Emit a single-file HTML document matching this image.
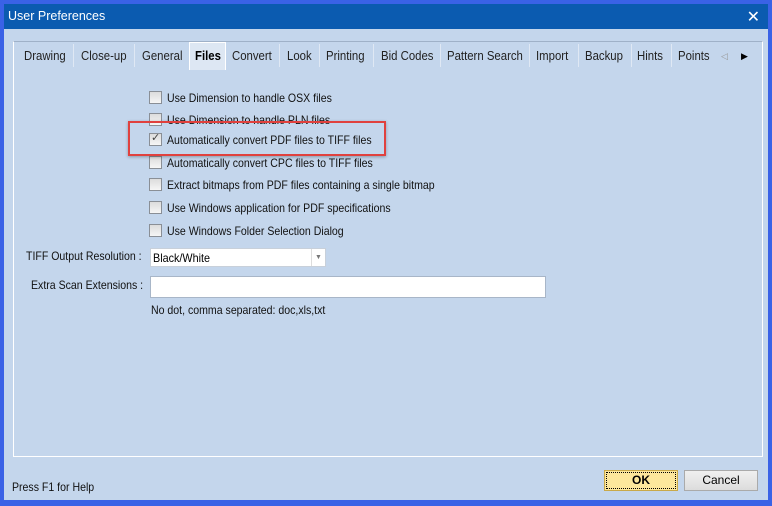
<!DOCTYPE html>
<html><head><style>
*{margin:0;padding:0;box-sizing:border-box}
body{width:772px;height:506px;overflow:hidden;background:#3a62e6;font-family:"Liberation Sans",sans-serif;font-size:12px;color:#000;position:relative}
.win{position:absolute;left:4px;top:4px;width:764px;height:496px;background:#c4d6ec}
.title{position:absolute;left:0;top:0;width:764px;height:25px;background:#0b5bb0;color:#fff;font-size:12.5px;padding:5px 4px}
.x{position:absolute;right:8px;top:3px;color:#fff;font-size:16px}
.panel{position:absolute;left:9px;top:37px;width:750px;height:416px;border:1px solid #fff;border-top:1px solid #9fb1c8}
.tab{position:absolute;top:49px;font-size:12.5px;color:#222;transform:scaleX(.91);transform-origin:left;white-space:nowrap}
.sep{position:absolute;top:44px;width:1px;height:23px;background:#dfe8f4}
.act{position:absolute;left:189px;top:42px;width:37px;height:28px;background:#dde7f3;border:1px solid #fff;border-bottom:none}
.cb{position:absolute;left:149px;width:13px;height:13px;border:1px solid #8a8f96;background:linear-gradient(#dcdcdc,#f6f6f6)}
.lb,.t{position:absolute;font-size:12px;color:#111;transform:scaleX(.88);transform-origin:left;white-space:nowrap}
.lb{left:167px}
.red{position:absolute;left:128px;top:121px;width:258px;height:35px;border:2px solid #e0413e;box-shadow:0 1px 3px rgba(0,0,0,.3)}
.btn{position:absolute;top:470px;height:21px;width:74px;text-align:center;line-height:19px;font-size:12px}
</style></head><body>
<div class="win">
<div class="title">User Preferences<span class="x">✕</span></div>
<div class="panel"></div>
</div>
<div class="act"></div>
<span class="tab" style="left:24px">Drawing</span><i class="sep" style="left:73px"></i>
<span class="tab" style="left:81px">Close-up</span><i class="sep" style="left:134px"></i>
<span class="tab" style="left:142px">General</span>
<span class="tab" style="left:195px;font-weight:bold;color:#000">Files</span>
<span class="tab" style="left:232px">Convert</span><i class="sep" style="left:279px"></i>
<span class="tab" style="left:287px">Look</span><i class="sep" style="left:319px"></i>
<span class="tab" style="left:326px">Printing</span><i class="sep" style="left:373px"></i>
<span class="tab" style="left:381px">Bid Codes</span><i class="sep" style="left:440px"></i>
<span class="tab" style="left:447px">Pattern Search</span><i class="sep" style="left:529px"></i>
<span class="tab" style="left:536px">Import</span><i class="sep" style="left:578px"></i>
<span class="tab" style="left:585px">Backup</span><i class="sep" style="left:631px"></i>
<span class="tab" style="left:637px">Hints</span><i class="sep" style="left:671px"></i>
<span class="tab" style="left:678px">Points</span>
<span style="position:absolute;left:721px;top:51px;font-size:9px;color:#999">◁</span>
<span style="position:absolute;left:741px;top:51px;font-size:9px;color:#000">▶</span>

<i class="cb" style="top:91px"></i><span class="lb" style="top:91px">Use Dimension to handle OSX files</span>
<i class="cb" style="top:113px"></i><span class="lb" style="top:113px">Use Dimension to handle PLN files</span>
<i class="cb" style="top:133px"></i><span style="position:absolute;left:151px;top:131px;font-size:11px;color:#444">✓</span><span class="lb" style="top:133px">Automatically convert PDF files to TIFF files</span>
<i class="cb" style="top:156px"></i><span class="lb" style="top:156px">Automatically convert CPC files to TIFF files</span>
<i class="cb" style="top:178px"></i><span class="lb" style="top:178px">Extract bitmaps from PDF files containing a single bitmap</span>
<i class="cb" style="top:201px"></i><span class="lb" style="top:201px">Use Windows application for PDF specifications</span>
<i class="cb" style="top:224px"></i><span class="lb" style="top:224px">Use Windows Folder Selection Dialog</span>
<div class="red"></div>

<span class="t" style="left:26px;top:249px">TIFF Output Resolution :</span>
<div style="position:absolute;left:150px;top:248px;width:176px;height:19px;background:#fff;border:1px solid #c8d0da;padding:2px 2px"><span style="display:inline-block;transform:scaleX(.9);transform-origin:left">Black/White</span><span style="position:absolute;right:0;top:0;width:14px;height:17px;border-left:1px solid #ddd;font-size:7px;color:#777;text-align:center;line-height:17px">▼</span></div>
<span class="t" style="left:31px;top:278px">Extra Scan Extensions :</span>
<div style="position:absolute;left:150px;top:276px;width:396px;height:22px;background:#fff;border:1px solid #a8b6c8"></div>
<span class="t" style="left:151px;top:303px">No dot, comma separated: doc,xls,txt</span>

<span class="t" style="left:12px;top:480px">Press F1 for Help</span>
<div class="btn" style="left:604px;background:#fde79c;border:1px solid #c9a94a;font-weight:bold;outline:1px dotted #000;outline-offset:-3px">OK</div>
<div class="btn" style="left:684px;background:linear-gradient(#f0f0f0,#dcdcdc);border:1px solid #aaa">Cancel</div>
</body></html>
